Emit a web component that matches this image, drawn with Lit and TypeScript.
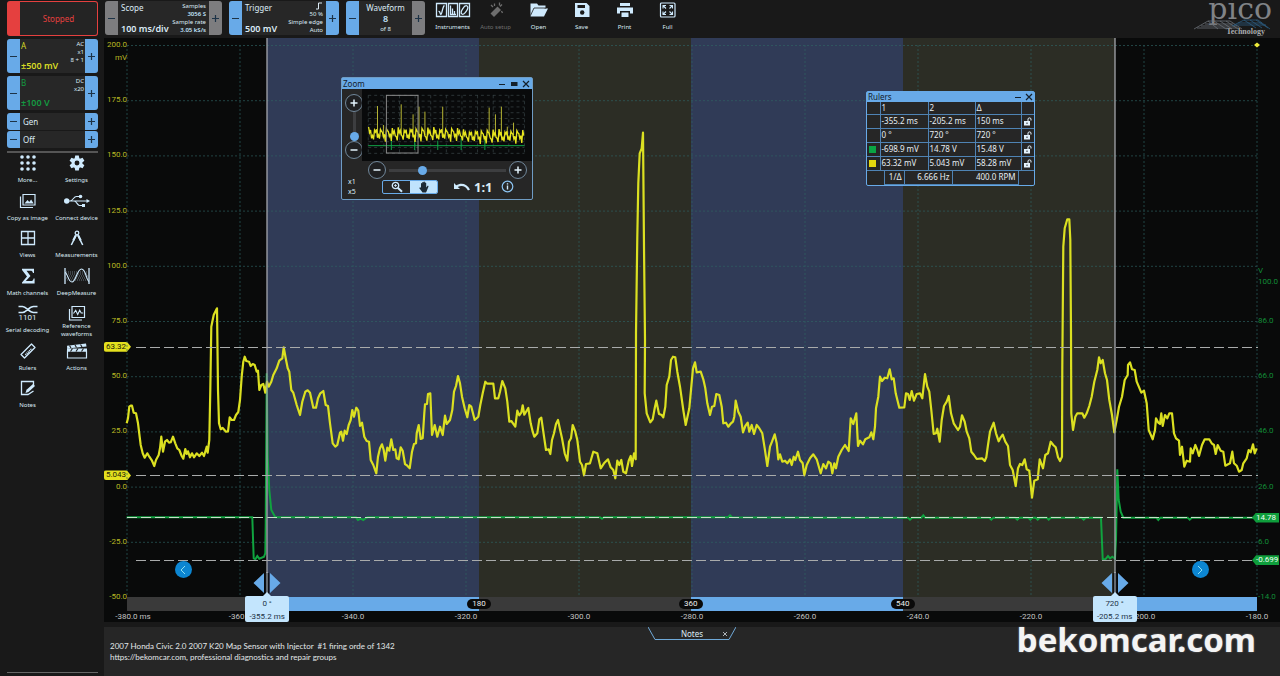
import { LitElement, html, svg, css } from "lit";
import { customElement } from "lit/decorators.js";
import { styleMap } from "lit/directives/style-map.js";

/* ---------- data ---------- */

// Each stretch of a trace holds its origin and points in thirds of a plot unit.
type Stretch = [number, number, string];

const channelA: Stretch[] = [
  [100, 290, "80,400 84,385 88,350 92,347 96,347 101,368 108,370 114,400 122,465 128,490 134,503 142,490 148,500 156,512 163,528 168,510 176,495 180,475 184,440 189,485 195,455 201,450 207,458 212,457 219,440 226,460 232,475 238,480 245,498 250,506 256,477 260,492 264,484 270,502 276,490 282,502 290,490 298,498 306,488 312,498 320,470 323,488 328,450 331,300 334,110 341,75 351,55 354,300 357,400 362,418 368,414 378,425 384,424 389,382 395,390 402,390 408,375 415,366 420,330 425,260 430,215 434,200 439,213 447,215 452,228 458,222 464,225 470,245 474,242 478,300 484,285 490,282 496,308 501,275 506,290 514,275 520,255 530,235 538,212 547,205 551,172 557,205 563,235 568,245 574,300 580,308 590,345 600,375 607,335 616,305 623,301 630,308 640,353 648,353 654,325 661,310 670,303 677,345 684,348 690,400 698,460 706,470 712,465 720,428 724,425 729,452 734,422 740,432 746,405 752,390 757,360 762,380 769,353 775,362 780,408 786,398 793,440 800,453 807,455 812,510 820,525 829,550 834,500 840,475 846,463 851,480 856,512 862,473 868,482 874,448 880,480 886,478 890,505 896,508 902,472 908,482 915,522 922,527 929,535 936,485 942,462 948,460 950,430 956,405 962,447 968,445 973,370 975,343 981,342 984,312 991,310 996,435 1004,405 1012,440 1020,410 1028,435 1035,377 1040,402 1050,390 1057,360 1062,305 1068,288 1074,258 1080,280 1086,320 1094,355 1102,382 1108,345 1114,350 1124,390 1135,380 1141,345"],
  [480, 120, "8,820 16,785 22,791 40,791 45,835 55,835 60,815 67,783 76,805 82,845 88,905 94,903 106,920 112,872 118,886 124,878 128,856 133,884 145,864 152,910 158,935 163,950 172,940 178,898 184,893 190,935 198,990 206,988 211,1002 216,960 222,940 228,912 234,900 240,928 246,955 254,1000 262,1022 267,965 273,955 278,915 286,935 292,960 300,1025 306,1035 312,1066 318,1032 330,1030 340,995 352,1000 362,1045 372,1030 384,1018 392,1042 400,1050 406,1075 412,1022 418,1035 424,1020 430,1055 438,1060 446,1022 452,1008 456,1038 462,1000 467,1018 468,640 472,350 475,190 479,100 485,85 489,38 492,380 495,660 494,820 500,880 511,907 518,898 524,865 529,842 537,882 545,885 550,892 556,860 560,795 568,770 573,720 579,710 586,712 592,755 600,800 610,870 617,915 628,865 634,800 639,745 645,727 650,757 662,755 670,778 676,805 682,850 690,885 696,860 703,858 709,822 718,825 725,860 730,910 738,908 745,920 753,910 759,905 763,890 767,842 775,875 782,890 789,937 796,918 803,908 808,935 815,915 822,942 830,915 838,925 847,940 854,985 862,1038 870,980 876,965 884,943 890,970 895,1018 900,1003 907,1025 915,1022 922,1030 930,1018 935,1035 941,1010 946,1020 954,995 960,1020 968,1030 973,1066 980,1035 990,1015 1000,1003 1010,1018 1022,1060 1030,1032 1038,1045 1045,1025 1052,1030 1057,1060 1063,1030 1068,1045 1075,1010 1085,990 1095,975 1106,993 1112,895 1120,912 1129,880 1134,978"],
  [860, 200, "0,722 9,733 16,718 28,712 34,697 40,718 45,680 48,625 55,590 60,530 66,543 74,533 82,535 89,508 95,538 101,535 107,580 118,623 133,622 138,580 144,582 149,600 155,573 162,602 170,582 180,580 187,595 195,522 202,560 208,575 214,630 221,702 228,700 232,686 239,725 245,660 252,618 260,605 266,588 273,640 281,670 294,690 300,680 306,646 314,665 320,695 328,715 334,755 342,765 350,777 366,775 374,783 379,772 384,735 390,695 401,668 408,700 416,724 422,712 428,704 436,725 444,738 450,795 458,810 467,858 474,805 480,792 487,795 494,778 500,808 508,812 516,893 523,842 533,838 539,778 549,805 556,765 564,760 572,725 580,735 587,742 594,772 600,783 606,770 607,500 610,140 614,85 622,58 628,58 631,120 633,400 634,640 639,690 646,650 652,640 667,640 673,653 680,640 688,618 695,590 703,545 712,510 717,472 722,490 728,480 735,520 741,540 748,600 756,645 763,697 770,660 777,620 786,590 794,540 803,525 804,495 810,487 816,508 824,510 830,545 844,578 852,572 860,610 866,690 878,718 885,690 888,655 895,668 900,672 904,640 908,678 915,645 922,655 928,640 936,640 942,700 948,715 957,722 960,765 966,740 973,800 980,782 990,785 992,745 998,760 1006,735 1012,750 1017,768 1026,735 1034,718 1048,718 1055,730 1062,735 1067,762 1073,735 1082,752 1090,755 1096,797 1110,790 1117,755 1122,790 1130,797 1137,815 1145,810 1150,790 1160,775 1166,750 1172,757 1179,733 1184,760 1190,745"],
];

const channelB: Stretch[] = [
  [100, 290, "80,682 457,682 461,805 466,808 472,798 478,806 492,800 496,790 497,700 500,250 503,500 508,600 514,660 526,682 768,682 774,690 782,686 790,690 798,684 804,682"],
  [480, 120, "360,1192 366,1196 372,1192 744,1192 750,1186 756,1192"],
  [860, 200, "0,953 144,953 150,959 156,953 184,953 190,946 196,953 388,953 394,959 400,953 466,953 472,959 478,953 505,953 511,959 517,953 527,953 533,959 539,953 560,953 566,959 572,953 665,953 671,959 677,953 723,953 728,1078 736,1078 744,1068 750,1075 757,1070 765,1076 768,1020 772,808 776,900 782,935 790,953 889,953 895,960 901,953 983,953 989,959 995,953 1191,953"],
];

const tracePoints = (parts: Stretch[]) =>
  parts
    .map(([ox, oy, pts]) =>
      pts
        .split(" ")
        .map((p) => {
          const [x, y] = p.split(",").map(Number);
          return `${(ox + x / 3).toFixed(1)},${(oy + y / 3).toFixed(1)}`;
        })
        .join(" ")
    )
    .join(" ");

const pointsA = tracePoints(channelA);
const pointsB = tracePoints(channelB);

const timeLeft = (ms: number) => `${((ms + 380) / 200) * 100}%`;
const milliTop = (mv: number) => `${((200 - mv) / 250) * 100}%`;
const voltTop = (v: number) => `${((186 - v) / 200) * 100}%`;

const milliTicks = ["200.0", "175.0", "150.0", "125.0", "100.0", "75.0", "50.0", "25.0", "0.0", "-25.0", "-50.0"];
const voltTicks = [100, 86, 66, 46, 26, 6, -14];
const timeTicks = [-380, -360, -340, -320, -300, -280, -260, -240, -220, -200, -180];

const rulerRows = [
  ["", "-355.2 ms", "-205.2 ms", "150 ms"],
  ["", "0 °", "720 °", "720 °"],
  ["green", "-698.9 mV", "14.78 V", "15.48 V"],
  ["yellow", "63.32 mV", "5.043 mV", "58.28 mV"],
];

const overviewPeaks = [[122, 108], [140, 165], [194, 103], [230, 133], [248, 110], [266, 125], [320, 110], [461, 113], [480, 133], [498, 110], [516, 170], [535, 158]];
const overviewSpikes = overviewPeaks.map(([x, y]) => `M${x} ${y}V195`).join("");
const overviewPoints = (() => {
  const out: string[] = [];
  const swing = [176, 186, 182, 200, 196, 211];
  let i = 0;
  for (let x = 95; x <= 567; x += 3, i++) {
    const drift = x > 380 ? 6 : 0;
    const jitter = ((i * 7) % 11) - 5;
    out.push(`${x},${swing[i % 6] + drift + jitter}`);
  }
  return out.join(" ");
})();

/* ---------- icons ---------- */

const icon = (w: number, h: number, body: unknown) =>
  html`<svg class="icon" width=${w} height=${h} viewBox="0 0 ${w} ${h}" aria-hidden="true">${body}</svg>`;

const icons = {
  more: icon(16, 16, svg`${[2, 8, 14].map((y) => [2, 8, 14].map((x) => svg`<circle cx=${x} cy=${y} r="1.8" fill="#cfeafd"/>`))}`),
  settings: icon(16, 16, svg`<g fill="#cfeafd">${[0, 60, 120, 180, 240, 300].map((a) => svg`<path d="M6.2 0.5h3.6l.6 3.5h-4.8z" transform="rotate(${a} 8 8)"/>`)}</g><circle cx="8" cy="8" r="3.9" fill="none" stroke="#cfeafd" stroke-width="2.9"/>`),
  copy: icon(18, 16, svg`<path d="M4 1.5h12v10.5H4zM1.500 3.500v11h12.500" fill="none" stroke="#cfeafd" stroke-width="1.200"/><path d="M5.500 10.500l3-3.500 1.800 2 1.800-2.500 2.600 4z" fill="#cfeafd"/>`),
  connect: icon(26, 14, svg`<path d="M2 7h21M6 7c3 0 3.500-4.500 6.500-4.500H16M10 7c3 0 3 4.500 5.500 4.500H19" fill="none" stroke="#cfeafd" stroke-width="1.100"/><circle cx="2.700" cy="7" r="2.700" fill="#cfeafd"/><circle cx="16.500" cy="2.500" r="1.800" fill="#cfeafd"/><path d="M18 10h3v3h-3zM22.500 5l3.500 2-3.500 2z" fill="#cfeafd"/>`),
  views: icon(16, 16, svg`<path d="M1.500 1.500h13v13h-13zM8 1.500v13M1.500 8h13" fill="none" stroke="#cfeafd" stroke-width="1.300"/>`),
  measure: icon(14, 16, svg`<circle cx="7" cy="3" r="1.800" fill="none" stroke="#cfeafd" stroke-width="1.300"/><path d="M6.300 4.800L1.300 15M7.700 4.800l5 10.200" stroke="#cfeafd" stroke-width="1.500" fill="none"/><path d="M5.700 5.500L3.200 10.500M8.300 5.500l2.500 5" stroke="#cfeafd" stroke-width="2"/>`),
  math: icon(14, 16, svg`<path d="M1 .7h12v4.300h-1c-.4-1.700-1-2.200-3-2.200H5.500L9.500 8l-4.700 5h4.800c2 0 2.600-.7 3-2.600h1V15.500H1v-1l5-6-5-6.500z" fill="#cfeafd"/>`),
  deep: icon(26, 18, svg`<path d="M1 1v16M25 1v16" stroke="#cfeafd" stroke-width="1.300"/><path d="M1 9h24M2 7h22M2 11h22M2 5h21M3 13h20" stroke="#9db4c4" stroke-width=".6" stroke-dasharray="1 1"/><path d="M1 5.500c2.500 0 3 9.500 7 9.500S13 2 17.500 2 22 13 25 14.500" fill="none" stroke="#cfeafd" stroke-width="1.100"/>`),
  serial: html`<span class="serial">${icon(20, 9, svg`<path d="M.5 1.500h4c4 0 6.500 6 11 6h4M.5 7.500h4c4 0 6.500-6 11-6h4" fill="none" stroke="#cfeafd" stroke-width="1.500"/>`)}<span class="bits">1101</span></span>`,
  reference: icon(18, 18, svg`<path d="M4 2.500h12.500v11H4zM1.500 5v11h12.500" fill="none" stroke="#cfeafd" stroke-width="1.200"/><path d="M5.500 9.500l2.200-3.200 2 4.200 2-4.200 1.500 2.700h2" fill="none" stroke="#cfeafd" stroke-width="1.100"/>`),
  rulers: icon(16, 16, svg`<path d="M1 11.500L11.500 1l3.500 3.500L4.500 15z" fill="none" stroke="#cfeafd" stroke-width="1.300" stroke-linejoin="round"/><path d="M5.500 12L12 5.500" stroke="#cfeafd" stroke-width="2" stroke-dasharray="1 .8"/>`),
  actions: icon(22, 16, svg`<path d="M1.500 8h19v7h-19z" fill="none" stroke="#cfeafd" stroke-width="1.200"/><path d="M1 5.500h20v3H1zM1 2.800L20 .5l.5 3L1.200 5.500z" fill="#cfeafd"/><path d="M4.500 8.500l2-3M10 8.500l2-3M15.500 8.500l2-3M5 5l-1.500-2.500M10.500 4.500L9 2M16 4l-1.500-2.500" stroke="#1a1a1a" stroke-width="1.100"/>`),
  notes: icon(16, 16, svg`<path d="M13.500 6V1.500h-12v13H8l5.500-3.500" fill="none" stroke="#cfeafd" stroke-width="1.300"/><path d="M5.500 13l1-3.200L13 4l2 2-6.500 6z" fill="#cfeafd"/>`),
  instruments: icon(36, 16, svg`<path d="M1.500 1.500h10v13h-10zM13.500 1.500h9v13h-9zM24.500 1.500h10v13h-10z" fill="none" stroke="#cfeafd" stroke-width="1.300"/><path d="M3.500 9.500c1.500-1 1.500 3 2.500 3S7.500 4 9.500 3.500M15.500 3.500v9h5.500M17.500 12V6.500M19.500 12V9" fill="none" stroke="#cfeafd" stroke-width="1.300"/><ellipse cx="29.500" cy="8" rx="2.200" ry="4.800" transform="rotate(32 29.500 8)" fill="none" stroke="#cfeafd" stroke-width="1.300"/>`),
  auto: icon(14, 16, svg`<path d="M1.500 11.500l7-7 3.500 3.500-7 7z" fill="#6e6e6e"/><path d="M5.500 1.500v2.500M10.500.5v3M13 2.500l-2 2M4 5L2 3M12.500 9l1 2" stroke="#6e6e6e" stroke-width="1.300"/>`),
  open: icon(20, 16, svg`<path d="M1.500 14V1.500H8l1.500 2h7V6" fill="#cfeafd"/><path d="M1.500 14.500L5.500 6.500H19L15 14.500z" fill="#cfeafd"/><path d="M1.500 13.500L5 6h12" fill="none" stroke="#1a1a1a" stroke-width=".8"/>`),
  save: icon(16, 16, svg`<path d="M1 1h11.500L15.500 4v11H1z" fill="#cfeafd"/><path d="M3.500 3h7.500v3H3.500z" fill="#1a1a1a"/><circle cx="8.200" cy="10.500" r="2.200" fill="#1a1a1a"/>`),
  print: icon(18, 16, svg`<path d="M4 1h10v3H4zM1 5.500h16v6h-3V9H4v2.500H1zM5.500 10.500h7V15h-7z" fill="#cfeafd"/>`),
  full: icon(18, 16, svg`<rect x="1.500" y="1" width="14.500" height="14" rx="1" fill="none" stroke="#cfeafd" stroke-width="1.200"/><path d="M4 6.500V3.500h3M4 3.500l3 3M13.500 6.500V3.500h-3M13.500 3.500l-3 3M4 9.500v3h3M4 12.500l3-3M13.500 9.500v3h-3M13.500 12.500l-3-3" fill="none" stroke="#cfeafd" stroke-width="1.100"/>`),
  unlock: icon(9, 9, svg`<path d="M1 4h6v4.500H1z" fill="#e4f3fd"/><path d="M5 4V2c0-1.500 3-1.500 3 0v1.500" fill="none" stroke="#e4f3fd" stroke-width="1"/><path d="M3.500 5.500h1V7h-1z" fill="#262626"/>`),
  magnify: icon(12, 12, svg`<circle cx="4.500" cy="4.500" r="3.200" fill="none" stroke="#cfeafd" stroke-width="1.300"/><path d="M7 7l4 3.700" stroke="#cfeafd" stroke-width="2"/><path d="M3 4.500h3M4.500 3v3" stroke="#cfeafd" stroke-width=".8"/>`),
  hand: icon(12, 12, svg`<path d="M3 6V2.500c0-.8 1-.8 1.200 0V1.500c0-.8 1.200-.8 1.300 0V1c.1-.8 1.300-.8 1.400 0v1c.2-.7 1.300-.7 1.300.1V6.500l1-1.300c.6-.7 1.600-.2 1.200.6L8.500 10.500 8 11.500H4.500L3.500 10 1.500 7.500c-.5-.8.5-1.400 1-.8z" fill="#1c2a36"/>`),
  undo: icon(18, 10, svg`<path d="M1 1v6h6L4.800 5C8 3 12.500 3.500 15 8.500l2-1C14 1.500 8 .3 3.200 3.300z" fill="#cfeafd"/>`),
  info: icon(13, 13, svg`<circle cx="6.500" cy="6.500" r="5.300" fill="none" stroke="#8cc4f2" stroke-width="1.200"/><path d="M6.500 5.500v4M6.500 3.200v1.300" stroke="#cfeafd" stroke-width="1.400"/>`),
};

const tools: [string, unknown][] = [
  ["More...", icons.more],
  ["Settings", icons.settings],
  ["Copy as image", icons.copy],
  ["Connect device", icons.connect],
  ["Views", icons.views],
  ["Measurements", icons.measure],
  ["Math channels", icons.math],
  ["DeepMeasure", icons.deep],
  ["Serial decoding", icons.serial],
  ["Reference waveforms", icons.reference],
  ["Rulers", icons.rulers],
  ["Actions", icons.actions],
  ["Notes", icons.notes],
];

const base = css`
  * { box-sizing: border-box; }
  button { font: inherit; color: inherit; background: none; border: 0; padding: 0; margin: 0; cursor: pointer; }
  svg { display: block; flex: none; }
`;

/* ---------- stepper: minus | content | plus ---------- */

@customElement("step-panel")
class StepPanel extends LitElement {
  static properties = { label: {}, down: {}, up: {} };
  declare label: string;
  declare down: string;
  declare up: string;

  static styles = [base, css`
    :host { display: flex; background: #272727; border-radius: 3px; overflow: hidden; min-width: 0; }
    .step { width: 13px; flex: none; background: #68aae8; display: grid; place-items: center; }
    .gray { background: #7d7d7f; }
    .body { flex: 1; min-width: 0; display: flex; }
    ::slotted(*) { flex: 1; min-width: 0; }
  `];

  render() {
    return html`
      <button class="step ${this.down ?? ""}" aria-label="${this.label} down">
        <svg width="7" height="7"><path d="M0 3.500h7" stroke="#1d3347" stroke-width="1.200"/></svg>
      </button>
      <div class="body"><slot></slot></div>
      <button class="step ${this.up ?? ""}" aria-label="${this.label} up">
        <svg width="7" height="7"><path d="M0 3.500h7M3.500 0v7" stroke="#1d3347" stroke-width="1.200"/></svg>
      </button>`;
  }
}

/* ---------- floating zoom overview ---------- */

@customElement("zoom-window")
class ZoomWindow extends LitElement {
  static styles = [base, css`
    :host { display: block; width: 192px; background: #262626; border: 1px solid #6f9cc4; border-radius: 2px; font: 8px/10px "Noto Sans", sans-serif; color: #dcebf5; }
    .title { display: flex; align-items: center; gap: 4px; height: 11px; background: #68aae8; color: #14202b; padding: 0 2px 0 1px; }
    .title span { flex: 1; }
    .top { display: flex; }
    .side { width: 20px; flex: none; display: flex; flex-direction: column; align-items: center; padding: 5px 0 0 4px; }
    .view { flex: 1; min-width: 0; background: #090a0b; height: 72px; width: 100%; }
    .round { width: 18px; height: 18px; border: 1px solid #71889b; border-radius: 50%; display: grid; place-items: center; flex: none; background: #1f2022; }
    input { appearance: none; background: transparent; margin: 0; min-width: 0; }
    .vert { writing-mode: vertical-lr; direction: rtl; width: 10px; height: 29px; }
    .vert::-webkit-slider-runnable-track { width: 3px; height: 29px; background: #3d3e40; }
    .vert::-webkit-slider-thumb { appearance: none; width: 9px; height: 9px; margin-left: -3px; border-radius: 50%; background: #68aae8; }
    .horz { flex: 1; height: 10px; }
    .horz::-webkit-slider-runnable-track { height: 3px; background: #3d3e40; }
    .horz::-webkit-slider-thumb { appearance: none; width: 9px; height: 9px; margin-top: -3px; border-radius: 50%; background: #68aae8; }
    .slide { display: flex; align-items: center; gap: 3px; padding: 0 5px 0 26px; }
    .bottom { display: flex; align-items: center; padding: 0 18px 5px 6px; height: 20px; }
    .scale { width: 34px; font-size: 7px; }
    .modes { display: flex; width: 56px; height: 14px; border: 1px solid #68aae8; border-radius: 2px; overflow: hidden; margin-right: 15px; }
    .modes button { flex: 1; display: grid; place-items: center; }
    .modes .on { background: #bfe3fd; }
    .ratio { font-weight: 700; font-size: 13px; margin: 0 6px 0 3px; flex: 1; text-align: left; }
  `];

  render() {
    const sign = (plus: boolean) => html`<svg width="8" height="8"><path d=${plus ? "M0.500 4h7M4 0.500v7" : "M0.500 4h7"} stroke="#e4f3fd" stroke-width="1.500"/></svg>`;
    const lines = Array.from({ length: 11 }, (_, i) => i);
    return html`
      <div class="title"><span>Zoom</span>
        <button aria-label="Minimise"><svg width="8" height="8"><path d="M1 4.500h6" stroke="#14202b"/></svg></button>
        <button aria-label="Maximise"><svg width="8" height="8"><path d="M1 2h6.500v4H1z" fill="#14202b"/></svg></button>
        <button aria-label="Close"><svg width="8" height="8"><path d="M1 1l6 6M7 1L1 7" stroke="#14202b" stroke-width="1.200"/></svg></button>
      </div>
      <div class="top">
        <div class="side">
          <button class="round" aria-label="Zoom in vertically">${sign(true)}</button>
          <input class="vert" type="range" min="0" max="100" value="0" aria-label="Vertical zoom">
          <button class="round" aria-label="Zoom out vertically">${sign(false)}</button>
        </div>
        <svg class="view" viewBox="75 57 516 216" preserveAspectRatio="none" role="img" aria-label="Waveform overview">
          <g stroke="#6d8387" stroke-width="1.500" stroke-dasharray="9 9" opacity=".7">
            ${lines.map((i) => svg`<path d="M${94 + i * 47.4} 76v174M94 ${76 + i * 17.4}h474"/>`)}
          </g>
          <path d="M94 227h474M164 200v40M235 212v28M305 212v28M376 205v35M448 200v40" fill="none" stroke="#12a64a" stroke-width="3"/>
          <path d=${overviewSpikes} fill="none" stroke="#b9b734" stroke-width="3"/>
          <polyline points=${overviewPoints} fill="none" stroke="#e6e41f" stroke-width="4"/>
          <rect x="149" y="76" width="96" height="173" fill="none" stroke="#8b8b8b" stroke-width="3"/>
        </svg>
      </div>
      <div class="slide">
        <button class="round" aria-label="Zoom out horizontally">${sign(false)}</button>
        <input class="horz" type="range" min="0" max="100" value="27" aria-label="Horizontal zoom">
        <button class="round" aria-label="Zoom in horizontally">${sign(true)}</button>
      </div>
      <div class="bottom">
        <div class="scale">x1<br>x5</div>
        <div class="modes">
          <button aria-label="Zoom tool">${icons.magnify}</button>
          <button class="on" aria-label="Pan tool">${icons.hand}</button>
        </div>
        <button aria-label="Undo zoom">${icons.undo}</button>
        <button class="ratio">1:1</button>
        <button aria-label="Information">${icons.info}</button>
      </div>`;
  }
}

/* ---------- floating ruler values ---------- */

@customElement("rulers-window")
class RulersWindow extends LitElement {
  static styles = [base, css`
    :host { display: block; width: 169px; background: #262626; border: 1px solid #68aae8; border-radius: 2px; font: 8px/10px "Noto Sans", sans-serif; color: #e6eef4; }
    .title { display: flex; align-items: center; gap: 3px; height: 10px; background: #68aae8; color: #14202b; padding: 0 1px; }
    .title span { flex: 1; }
    table { border-collapse: collapse; table-layout: fixed; width: 100%; }
    th, td { border: 1px solid #4f83b4; height: 14px; padding: 0 2px 0 1px; text-align: left; font-weight: 400; white-space: nowrap; }
    tr > :first-child { border-left: 0; }
    tr > :last-child { border-right: 0; }
    .grid tr:first-child th { border-top: 0; height: 12px; }
    .sum td { height: 14px; border-top: 0; text-align: right; }
    .sum tr > td { border-bottom: 0; }
    .sum tr > td.low { border-bottom: 1px solid #4f83b4; }
    .swatch { width: 7px; height: 7px; margin-left: 1px; background: #0aa544; }
    .yellow { background: #e4d80e; }
    .lock { display: block; }
    .c0 { width: 13px; } .c1 { width: 48px; } .c2 { width: 47px; } .c4 { width: 13px; }
    .s0 { width: 17px; } .s1 { width: 20px; } .s2 { width: 48px; } .s4 { width: 16px; }
  `];

  render() {
    return html`
      <div class="title"><span>Rulers</span>
        <button aria-label="Minimise"><svg width="8" height="8"><path d="M1 4.500h6" stroke="#14202b"/></svg></button>
        <button aria-label="Close"><svg width="8" height="8"><path d="M1 1l6 6M7 1L1 7" stroke="#14202b" stroke-width="1.200"/></svg></button>
      </div>
      <table class="grid">
        <colgroup><col class="c0"><col class="c1"><col class="c2"><col><col class="c4"></colgroup>
        <tr><th></th><th>1</th><th>2</th><th>Δ</th><th></th></tr>
        ${rulerRows.map(([c, a, b, d]) => html`<tr>
          <td>${c ? html`<div class="swatch ${c}"></div>` : ""}</td>
          <td>${a}</td><td>${b}</td><td>${d}</td>
          <td><button class="lock" aria-label="Lock ruler">${icons.unlock}</button></td>
        </tr>`)}
      </table>
      <table class="sum">
        <colgroup><col class="s0"><col class="s1"><col class="s2"><col><col class="s4"></colgroup>
        <tr><td></td><td class="low">1/Δ</td><td class="low">6.666 Hz</td><td class="low">400.0 RPM</td><td></td></tr>
      </table>`;
  }
}

/* ---------- main graph ---------- */

@customElement("scope-graph")
class ScopeGraph extends LitElement {
  static styles = [base, css`
    :host { display: grid; position: relative; background: #090a0a; padding-top: 7px; grid-template: 1fr 14px 11px / 23px 1fr 23px; font: 8px/10px Roboto, sans-serif; overflow: hidden; }
    .milli { display: flex; flex-direction: column; justify-content: space-between; color: #b9b823; position: relative; text-align: right; }
    .milli .tick { height: 0; line-height: 0; }
    .unit { position: absolute; right: 0; top: 8px; }
    .volt { color: #128c37; position: relative; }
    .at { position: absolute; line-height: 0; height: 0; left: 1px; white-space: nowrap; }
    .vunit { margin-top: -11px; }
    .plot { position: relative; }
    .plot > svg { position: absolute; inset: 0; width: 100%; height: 100%; overflow: visible; }
    .plot path, .plot polyline { vector-effect: non-scaling-stroke; fill: none; }
    .plot .origin { fill: #ece93a; }
    .tag { position: absolute; right: -4px; width: 27px; height: 10px; line-height: 10px; margin-top: -5px; background: #e4e01e; color: #22220a; padding-left: 2px; text-align: left; clip-path: polygon(0 0, 85% 0, 100% 50%, 85% 100%, 0 100%); border-radius: 2px; }
    .vtag { position: absolute; left: -5px; width: 27px; height: 10px; line-height: 10px; margin-top: -5px; background: #0f9e3c; color: #f0fff2; padding-left: 4px; clip-path: polygon(15% 0, 100% 0, 100% 100%, 15% 100%, 0 50%); white-space: nowrap; }
    .bar { grid-column: 2; grid-row: 2; position: relative; background: #3a3a3a; }
    .part { position: absolute; top: 0; bottom: 0; background: #68aae8; }
    .pill { position: absolute; top: 2px; width: 24px; margin-left: -12px; height: 10px; border-radius: 5px; background: #0a0a0a; color: #ededed; text-align: center; }
    .times { grid-column: 2; grid-row: 3; position: relative; color: #c4c4c4; }
    .time { position: absolute; width: 50px; margin-left: -25px; text-align: center; top: 1px; }
    .first { margin-left: -19px; }
    .flag { position: absolute; top: -1px; width: 44px; margin-left: -22px; height: 26px; background: #c3e5fd; color: #1d3347; border-radius: 2px; text-align: center; line-height: 13px; z-index: 1; padding-top: 1px; }
    .handles { position: absolute; left: 8px; top: -24px; }
    .nav { position: absolute; width: 17px; height: 17px; margin: -8px 0 0 -9px; border-radius: 50%; background: #0c86d2; display: grid; place-items: center; top: 95%; }
    .prev { left: 5%; }
    .next { left: 95%; }
    .zoom { position: absolute; left: 237px; top: 39px; z-index: 2; }
    .rulers { position: absolute; left: 762px; top: 53px; z-index: 2; }
  `];

  flag(ms: number, degrees: string) {
    return html`<div class="flag" style=${styleMap({ left: timeLeft(ms) })}>
      <svg class="handles" width="28" height="28" aria-hidden="true">
        <path d="M12 1h4v24h-4z" fill="#0d1017"/><path d="M14 0v24" stroke="#b9c2cc"/>
        <path d="M11 1v20L.500 11zM17 1v20L27.500 11z" fill="#68aae8"/>
        <path d="M14 20l5 5h-10z" fill="#c3e5fd"/>
      </svg>
      <div>${degrees}</div><div>${ms} ms</div>
    </div>`;
  }

  render() {
    const steps = Array.from({ length: 11 }, (_, i) => i);
    return html`
      <div class="milli">
        ${milliTicks.map((t) => html`<div class="tick">${t}</div>`)}
        <div class="unit">mV</div>
        <div class="tag" style=${styleMap({ top: milliTop(63.32) })}>63.32</div>
        <div class="tag" style=${styleMap({ top: milliTop(5.043) })}>5.043</div>
      </div>
      <div class="plot">
        <svg viewBox="127 45 1130 552" preserveAspectRatio="none" role="img" aria-label="Scope trace of channels A and B">
          <rect x="267" y="38" width="212" height="559" fill="#303b57"/>
          <rect x="479" y="38" width="212" height="559" fill="#2c2d25"/>
          <rect x="691" y="38" width="212" height="559" fill="#303b57"/>
          <rect x="903" y="38" width="212" height="559" fill="#2c2d25"/>
          <g stroke="#2f6464" stroke-width="1" stroke-dasharray="2 2" opacity=".65">
            ${steps.map((i) => svg`<path d="M${127 + i * 113} 45v552M127 ${45.5 + i * 55.2}h1130"/>`)}
          </g>
          <polyline points=${pointsB} stroke="#10a33f" stroke-width="2"/>
          <polyline points=${pointsA} stroke="#dbe021" stroke-width="2.200" stroke-linejoin="round"/>
          <path d="M136 347.500h1122M136 475.500h1122M136 560.500h1122" stroke="#a9abab" stroke-width="1" stroke-dasharray="10 4"/>
          <path d="M127 517.500h1130" stroke="#c6dfc9" stroke-width="1" stroke-dasharray="10 4"/>
          <path d="M267 38v559M1115 38v559" stroke="#a3a5ab" stroke-width="1.300"/>
          <path d="M1254 45l3-2.500 3 2.500-3 2.500z" class="origin"/>
        </svg>
        <button class="nav prev" aria-label="Previous"><svg width="8" height="10"><path d="M6 1L2 5l4 4" fill="none" stroke="#8fe0f2"/></svg></button>
        <button class="nav next" aria-label="Next"><svg width="8" height="10"><path d="M2 1l4 4-4 4" fill="none" stroke="#8fe0f2"/></svg></button>
      </div>
      <div class="volt">
        <div class="at vunit" style=${styleMap({ top: voltTop(100) })}>V</div>
        ${voltTicks.map((v) => html`<div class="at" style=${styleMap({ top: voltTop(v) })}>${v.toFixed(1)}</div>`)}
        <div class="vtag" style=${styleMap({ top: voltTop(14.78) })}>14.78</div>
        <div class="vtag" style=${styleMap({ top: voltTop(-0.699) })}>-0.699</div>
      </div>
      <div class="bar">
        ${[[-355.2, -317.7], [-280.2, -242.7], [-205.2, -180]].map(([a, b]) => html`<div class="part" style=${styleMap({ left: timeLeft(a), width: `${(b - a) / 2}%` })}></div>`)}
        ${[[180, -317.7], [360, -280.2], [540, -242.7]].map(([d, t]) => html`<div class="pill" style=${styleMap({ left: timeLeft(t) })}>${d}</div>`)}
        ${this.flag(-355.2, "0 °")}${this.flag(-205.2, "720 °")}
      </div>
      <div class="times">
        ${timeTicks.map((t, i) => html`<div class="time ${i ? "" : "first"}" style=${styleMap({ left: timeLeft(t) })}>${t.toFixed(1)}${i ? "" : " ms"}</div>`)}
      </div>
      <zoom-window class="zoom"></zoom-window>
      <rulers-window class="rulers"></rulers-window>`;
  }
}

/* ---------- application shell ---------- */

@customElement("app-root")
class AppRoot extends LitElement {
  static styles = [base, css`
    :host { display: grid; grid-template: 38px 1fr 54px / 104px 1fr; height: 100vh; min-height: 520px; background: #191919; color: #dcebf5; font: 6px/8px "Noto Sans", sans-serif; position: relative; overflow: hidden; }
    .sidebar { grid-row: 1 / -1; display: flex; flex-direction: column; padding: 1px 6px 3px 7px; gap: 3px; }
    .stopped { height: 35px; flex: none; display: flex; border: 1px solid #e5403f; border-radius: 3px; overflow: hidden; font-size: 8px; color: #e5403f; background: #242424; align-items: center; justify-content: center; border-left-width: 13px; }
    .channel { height: 34px; flex: none; }
    .info { display: flex; justify-content: space-between; padding: 1px 1px 2px 1px; }
    .main { display: flex; flex-direction: column; justify-content: space-between; white-space: nowrap; font-size: 8px; line-height: 11px; }
    .big { font-weight: 600; font-size: 9px; }
    .detail { text-align: right; white-space: nowrap; color: #dcebf5; }
    .detail b { font-weight: 600; color: #c3e5fd; }
    .a { color: #d6da25; }
    .b { color: #149a41; }
    .pair { display: flex; flex-direction: column; gap: 1px; flex: none; }
    .pair step-panel { height: 17px; }
    .name { font-size: 8px; line-height: 17px; padding-left: 3px; }
    .rule { height: 2px; flex: none; background: #555; }
    .tools { display: grid; grid-template: repeat(7, 1fr) / repeat(2, minmax(0, 1fr)); height: 263px; flex: none; margin: -2px -3px 0 -4px; }
    .tool { display: flex; flex-direction: column; align-items: center; }
    .pic { height: 18px; display: grid; place-items: center; }
    .caption { height: 16px; display: flex; align-items: center; justify-content: center; white-space: nowrap; }
    .wrap { white-space: normal; width: 36px; }
    .serial { display: grid; justify-items: center; }
    .bits { font: 8px/8px Roboto, sans-serif; }
    .foot { margin-top: auto; height: 1px; background: #666; }
    .topbar { display: flex; padding: 1px 8px 0 1px; align-items: flex-start; gap: 7px; }
    .topbar step-panel { height: 34px; flex: none; }
    .scope { width: 117px; }
    .trigger { width: 110px; }
    .wave { width: 79px; }
    .center { text-align: center; padding-top: 1px; font-size: 8px; line-height: 11px; }
    .center b { font-size: 9px; font-weight: 600; display: block; line-height: 12px; color: #c3e5fd; }
    .center small { font-size: 6px; line-height: 9px; display: block; }
    .pad { padding: 1px 3px 1px 3px; }
    .edge { display: flex; justify-content: flex-end; height: 8px; }
    .actions { display: flex; margin-left: -1px; }
    .act { width: 43px; display: flex; flex-direction: column; align-items: center; }
    .act .label { line-height: 10px; margin-top: 3px; white-space: nowrap; }
    .off { color: #6e6e6e; }
    .logo { margin-left: auto; width: 78px; height: 36px; position: relative; color: #808386; }
    .pico { font: 30px/22px "DejaVu Serif", serif; text-align: right; margin-top: -3px; }
    .mesh { position: absolute; left: 0; top: 17px; }
    .tech { font: bold 8px/8px "Liberation Serif", serif; text-align: right; padding: 8px 7px 0 0; color: #a9abad; }
    .notes { background: #262626; margin-top: 5px; display: flex; flex-direction: column; align-items: center; }
    .tab { position: relative; width: 88px; height: 13px; font-size: 8px; line-height: 13px; text-align: center; flex: none; }
    .tab > svg { position: absolute; inset: 0; }
    .close { position: absolute; right: 8px; top: 4px; }
    textarea { flex: 1; width: 100%; border: 0; background: transparent; color: #e2e6e8; resize: none; font: 8px/11px Lato, "Noto Sans", sans-serif; padding: 1px 6px; outline: none; display: block; overflow: hidden; }
    .mark { position: absolute; right: 24px; bottom: 19px; font: 700 33px/34px "Noto Sans", sans-serif; color: #f4f4f4; text-shadow: 0 0 2px #777; }
  `];

  render() {
    return html`
      <aside class="sidebar">
        <button class="stopped">Stopped</button>
        <step-panel class="channel" label="Channel A range">
          <div class="info"><div class="main a"><span>A</span><span class="big">±500 mV</span></div><div class="detail">AC<br>x1<br>8 + 1</div></div>
        </step-panel>
        <step-panel class="channel" label="Channel B range">
          <div class="info"><div class="main b"><span>B</span><span class="big">±100 V</span></div><div class="detail">DC<br>x20</div></div>
        </step-panel>
        <div class="pair">
          <step-panel label="Generator"><div class="name">Gen</div></step-panel>
          <step-panel label="Generator output"><div class="name">Off</div></step-panel>
        </div>
        <div class="rule"></div>
        <nav class="tools">
          ${tools.map(([name, pic]) => html`<button class="tool"><span class="pic">${pic}</span><span class="caption ${name.startsWith("Ref") ? "wrap" : ""}">${name}</span></button>`)}
        </nav>
        <div class="foot"></div>
      </aside>
      <header class="topbar">
        <step-panel class="scope" label="Timebase" down="gray" up="gray">
          <div class="info pad"><div class="main"><span>Scope</span><span class="big">100 ms/div</span></div><div class="detail">Samples<br><b>3056 S</b><br>Sample rate<br><b>3.05 kS/s</b></div></div>
        </step-panel>
        <step-panel class="trigger" label="Trigger level">
          <div class="info pad"><div class="main"><span>Trigger</span><span class="big">500 mV</span></div>
            <div class="detail"><span class="edge"><svg width="8" height="8"><path d="M1 7h2.500V1H7" fill="none" stroke="#dcebf5"/></svg></span>50 %<br>Simple edge<br>Auto</div></div>
        </step-panel>
        <step-panel class="wave" label="Waveform" up="gray">
          <div class="center">Waveform<b>8</b><small>of 8</small></div>
        </step-panel>
        <div class="actions">
          ${([["Instruments", icons.instruments], ["Auto setup", icons.auto], ["Open", icons.open], ["Save", icons.save], ["Print", icons.print], ["Full", icons.full]] as [string, unknown][]).map(
            ([name, pic]) => html`<button class="act ${name === "Auto setup" ? "off" : ""}"><span class="pic">${pic}</span><span class="label">${name}</span></button>`
          )}
        </div>
        <div class="logo">
          <div class="pico">pico</div>
          <svg class="mesh" width="78" height="12" aria-hidden="true">
            <g fill="none" stroke="#6a7076" stroke-width=".8"><path d="M0 11L14 3h22l12 8M3 10h42M7 8h36M11 6h28M14 3l10 8M20 3l12 8M26 3l12 8M32 3l12 8"/></g>
            <g fill="none" stroke="#2b5c80" stroke-width=".8"><path d="M38 8l12-6h14l12 9M44 5h24M40 7h32M50 2l12 8M56 2l12 8M62 2l12 8"/></g>
          </svg>
          <div class="tech">Technology</div>
        </div>
      </header>
      <scope-graph></scope-graph>
      <section class="notes">
        <div class="tab">
          <svg width="88" height="13"><path d="M0 0l7 12.500h74L88 0" fill="none" stroke="#6fa9d8"/></svg>
          <label for="note">Notes</label>
          <button class="close" aria-label="Close notes"><svg width="6" height="6"><path d="M1 1l4 4M5 1L1 5" stroke="#cfd6da" stroke-width=".8"/></svg></button>
        </div>
        <textarea id="note" .value=${"2007 Honda Civic 2.0 2007 K20 Map Sensor with Injector  #1 firing orde of 1342\nhttps://bekomcar.com, professional diagnostics and repair groups"}></textarea>
      </section>
      <div class="mark">bekomcar.com</div>`;
  }
}
